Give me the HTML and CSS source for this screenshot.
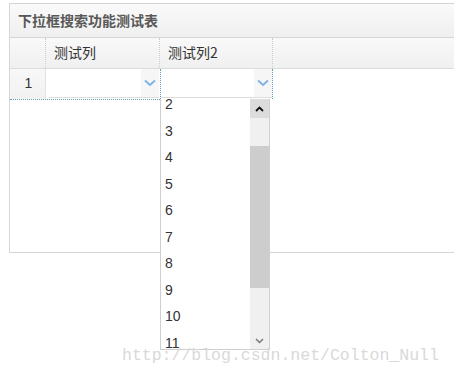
FILE: index.html
```html
<!DOCTYPE html>
<html>
<head>
    <meta charset="utf-8">
    <title>下拉框搜索功能测试表</title>
    <link rel="stylesheet" href="styles.css">
</head>
<body>
<div id="panel">
    <div class="panel-title">下拉框搜索功能测试表</div>
    <div class="grid">
        <div class="grid-head">
            <div class="cell rownum"></div>
            <div class="cell col1">测试列</div>
            <div class="cell col2">测试列2</div>
            <div class="cell fill"></div>
        </div>
        <div class="grid-row">
            <div class="cell rownum">1</div>
            <div class="cell col1 edit">
                <div class="combo">
                    <span class="combo-text"></span>
                    <span class="combo-arrow"><svg width="12" height="8" viewBox="0 0 12 8"><path d="M1 1.5 L6 6 L11 1.5" fill="none" stroke="#7fb4e2" stroke-width="2"/></svg></span>
                </div>
            </div>
            <div class="cell col2 edit focus">
                <div class="combo">
                    <span class="combo-text"></span>
                    <span class="combo-arrow"><svg width="12" height="8" viewBox="0 0 12 8"><path d="M1 1.5 L6 6 L11 1.5" fill="none" stroke="#7fb4e2" stroke-width="2"/></svg></span>
                </div>
            </div>
        </div>
    </div>
</div>

<div id="droplist">
    <div class="items">
        <div class="item">2</div>
        <div class="item">3</div>
        <div class="item">4</div>
        <div class="item">5</div>
        <div class="item">6</div>
        <div class="item">7</div>
        <div class="item">8</div>
        <div class="item">9</div>
        <div class="item">10</div>
        <div class="item">11</div>
    </div>
    <div class="scrollbar">
        <div class="sb-up"><svg width="9" height="6" viewBox="0 0 9 6"><path d="M1 5 L4.5 1.5 L8 5" fill="none" stroke="#111" stroke-width="1.8"/></svg></div>
        <div class="sb-track">
            <div class="sb-thumb"></div>
        </div>
        <div class="sb-down"><svg width="9" height="6" viewBox="0 0 9 6"><path d="M1 1 L4.5 4.5 L8 1" fill="none" stroke="#777" stroke-width="1.5"/></svg></div>
    </div>
</div>

<div id="mark">http://blog.csdn.net/Colton_Null</div>
</body>
</html>
```

FILE: styles.css
```css
body {
    margin: 0;
    background: white;
    width: 454px;
    height: 379px;
    overflow: hidden;
    position: relative;
    font-family: "Liberation Sans", "Noto Sans CJK SC", sans-serif;
}

#panel {
    margin: 3px 0 0 9px;
    width: 460px;
    height: 248px;
    border: 1px solid #d6d6d6;
    border-right: none;
}

.panel-title {
    height: 33px;
    line-height: 32px;
    padding-left: 8px;
    font-family: "Noto Sans CJK SC", sans-serif;
    font-size: 14px;
    font-weight: bold;
    color: #585858;
    background: linear-gradient(#fafafa, #efefef);
    border-bottom: 1px solid #d6d6d6;
}

.grid-head {
    display: flex;
    height: 30px;
    background: linear-gradient(#f9f9f9, #f0f0f0);
    border-bottom: 1px solid #dcdcdc;
}

.grid-row {
    display: flex;
    height: 30px;
    border-bottom: 1px dotted #5f9fb7;
    width: 150px;
}

.cell {
    box-sizing: border-box;
    border-right: 1px dotted #cccccc;
    font-size: 13px;
    color: #333;
}

.grid-head .cell {
    line-height: 29px;
    font-family: "Noto Sans CJK SC", sans-serif;
    font-size: 14px;
    padding-left: 8px;
}

.rownum {
    flex: 0 0 36px;
}

.col1 {
    flex: 0 0 114px;
}

.col2 {
    flex: 0 0 113px;
}

.fill {
    flex: 1;
    border-right: none;
}

.grid-row .rownum {
    background: linear-gradient(#f8f8f8, #f1f1f1);
    text-align: center;
    line-height: 29px;
    font-size: 14px;
    color: #333;
    padding-left: 2px;
    border-right: 1px solid #e2e2e2;
}

.grid-row .cell {
    flex-shrink: 0;
}

.edit {
    padding: 0 1px 0 3px;
    border-right: none;
}

.focus {
    border: 1px dotted #5f9fb7;
    border-top: none;
    border-bottom: none;
    padding: 0;
}

.combo {
    display: flex;
    height: 29px;
    background: white;
    border-bottom: 1px solid #dddddd;
    box-sizing: border-box;
}

.combo-text {
    flex: 1;
}

.combo-arrow {
    width: 18px;
    display: flex;
    align-items: center;
    justify-content: center;
    background: #f6f6f6;
}

#droplist {
    position: absolute;
    left: 160px;
    top: 99px;
    width: 110px;
    height: 251px;
    box-sizing: border-box;
    border: 1px solid #cfcfcf;
    border-top: none;
    background: white;
    overflow: hidden;
    display: flex;
}

.items {
    flex: 1;
    margin-top: -8px;
}

.item {
    height: 26.5px;
    line-height: 26.5px;
    padding-left: 4px;
    font-size: 14px;
    color: #333;
}

.scrollbar {
    width: 19px;
    display: flex;
    flex-direction: column;
    background: #f0f0f0;
}

.sb-up {
    height: 19px;
    background: #dcdcdc;
    display: flex;
    align-items: center;
    justify-content: center;
}

.sb-track {
    flex: 1;
    padding-top: 28px;
    padding-bottom: 44px;
}

.sb-thumb {
    height: 100%;
    background: #cdcdcd;
}

.sb-down {
    height: 17px;
    display: flex;
    align-items: center;
    justify-content: center;
}

#mark {
    position: absolute;
    left: 122px;
    top: 346px;
    font-family: "Liberation Mono", monospace;
    font-size: 16.5px;
    color: #d9d9d9;
}
```
